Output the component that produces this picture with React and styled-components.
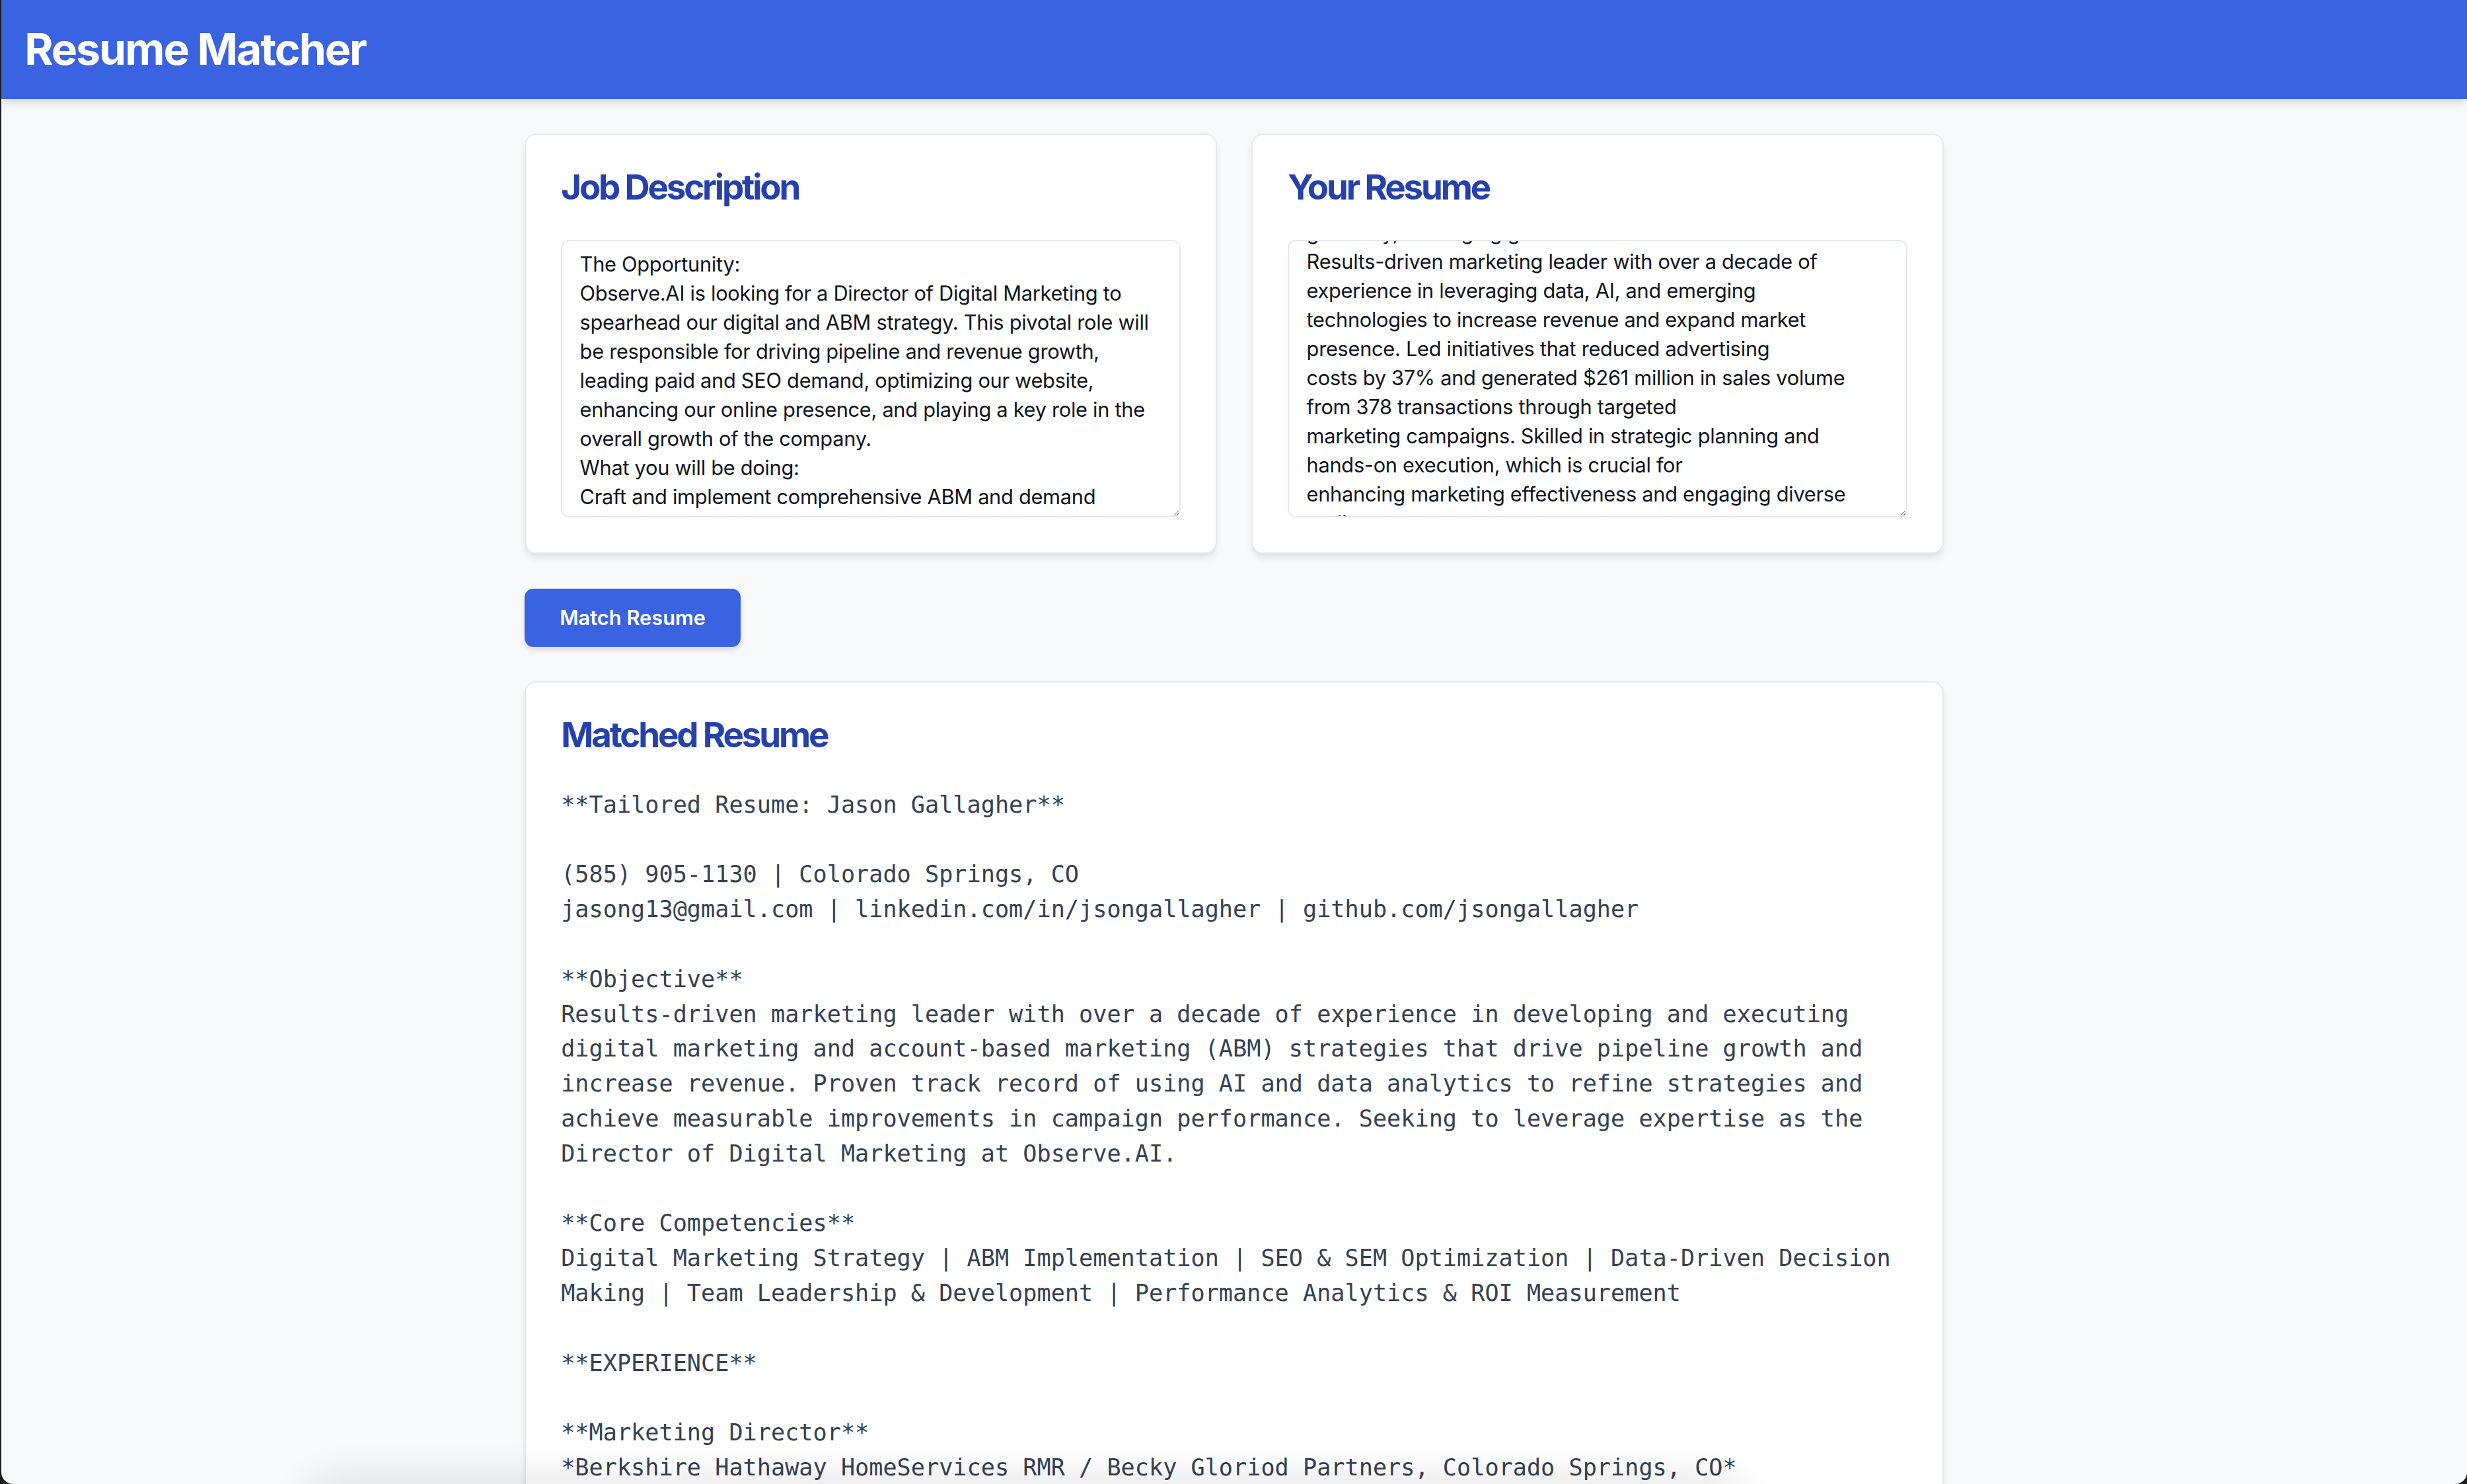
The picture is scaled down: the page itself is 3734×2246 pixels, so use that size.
import { useEffect, useRef } from "react";
import styled, { createGlobalStyle } from "styled-components";

const GlobalStyle = createGlobalStyle`
  html, body {
    margin: 0;
    padding: 0;
    overflow: hidden;
    background: #1d1d1f;
  }
  * {
    box-sizing: border-box;
  }
`;

// outer screen: the dark strip on the left and round bottom corners come from the window frame
const Screen = styled.div`
  width: 3734px;
  height: 2246px;
  overflow: hidden;
  background: #1d1d1f;
`;

const Window = styled.div`
  position: relative;
  height: 100%;
  margin-left: 2px;
  background: #f8f9fb;
  border-radius: 0 0 18px 18px;
  overflow: hidden;
`;

// the screenshot was taken at 2.2x, so the page is laid out in css px and zoomed
const Page = styled.div`
  zoom: 2.2;
  font-family: Inter, "Noto Sans", sans-serif;
`;

const Header = styled.header`
  position: relative;
  z-index: 1;
  padding: 16px 16px;
  background: #3a63e1;
  box-shadow: 0 4px 6px -1px rgba(0, 0, 0, 0.1), 0 2px 4px -2px rgba(0, 0, 0, 0.1);
`;

const AppTitle = styled.h1`
  margin: 0;
  color: #ffffff;
  font-size: 30px;
  line-height: 36px;
  font-weight: 700;
  letter-spacing: -0.03em;
`;

const Main = styled.main`
  max-width: 1024px;
  margin: 0 auto;
  padding: 24px;
`;

const InputGrid = styled.div`
  display: grid;
  grid-template-columns: 1fr 1fr;
  gap: 24px;
  margin-bottom: 24px;
`;

const Card = styled.section`
  background: #ffffff;
  border: 1px solid #e6e8ee;
  border-radius: 8px;
  padding: 20px 24px 24px;
  box-shadow: 0 4px 6px -1px rgba(0, 0, 0, 0.08), 0 2px 4px -2px rgba(0, 0, 0, 0.08);
`;

const CardTitle = styled.h2`
  margin: 0 0 20px;
  color: #2541ab;
  font-size: 24px;
  line-height: 32px;
  font-weight: 700;
  letter-spacing: -0.06em;
`;

const TextBox = styled.textarea`
  display: block;
  width: 100%;
  height: 191px;
  padding: 6px 12px 10px;
  border: 1px solid #e3e7ee;
  border-radius: 6px;
  background: #ffffff;
  color: #0f1420;
  font-family: Inter, "Noto Sans", sans-serif;
  font-size: 14px;
  line-height: 20px;
  letter-spacing: -0.01em;
  resize: vertical;
  outline: none;
  scrollbar-width: none;
`;

const MatchButton = styled.button`
  display: block;
  height: 40px;
  margin-bottom: 24px;
  padding: 0 24px;
  border: none;
  border-radius: 6px;
  background: #3a63e1;
  color: #ffffff;
  font-family: Inter, "Noto Sans", sans-serif;
  font-size: 14px;
  line-height: 20px;
  font-weight: 600;
  cursor: pointer;
  box-shadow: 0 2px 4px rgba(0, 0, 0, 0.12);
`;

const ResumeOutput = styled.pre`
  margin: 0;
  color: #334155;
  font-family: "DejaVu Sans Mono", "Liberation Mono", monospace;
  font-size: 16px;
  line-height: 24px;
  white-space: pre-wrap;
`;

// shadow of something sitting just under the bottom edge of the window
const BottomShade = styled.div`
  position: absolute;
  left: 470px;
  width: 2160px;
  bottom: -90px;
  height: 90px;
  border-radius: 40px;
  box-shadow: 0 0 60px 10px rgba(0, 0, 0, 0.1);
`;

const jobDescription = `The Opportunity:
Observe.AI is looking for a Director of Digital Marketing to spearhead our digital and ABM strategy. This pivotal role will be responsible for driving pipeline and revenue growth, leading paid and SEO demand, optimizing our website, enhancing our online presence, and playing a key role in the overall growth of the company.
What you will be doing:
Craft and implement comprehensive ABM and demand generation strategies to drive pipeline growth and revenue.
Own paid search, paid social, SEO and website performance.
Partner with sales and product marketing on target account lists.`;

const yourResume = `Jason Gallagher
(585) 905-1130 | Colorado Springs, CO
jasong13@gmail.com | linkedin.com/in/jsongallagher
github.com/jsongallagher

SUMMARY
generally, leveraging growth
Results-driven marketing leader with over a decade of
experience in leveraging data, AI, and emerging
technologies to increase revenue and expand market
presence. Led initiatives that reduced advertising
costs by 37% and generated $261 million in sales volume
from 378 transactions through targeted
marketing campaigns. Skilled in strategic planning and
hands-on execution, which is crucial for
enhancing marketing effectiveness and engaging diverse
audiences.`;

const matchedResume = `**Tailored Resume: Jason Gallagher**

(585) 905-1130 | Colorado Springs, CO
jasong13@gmail.com | linkedin.com/in/jsongallagher | github.com/jsongallagher

**Objective**
Results-driven marketing leader with over a decade of experience in developing and executing digital marketing and account-based marketing (ABM) strategies that drive pipeline growth and increase revenue. Proven track record of using AI and data analytics to refine strategies and achieve measurable improvements in campaign performance. Seeking to leverage expertise as the Director of Digital Marketing at Observe.AI.

**Core Competencies**
Digital Marketing Strategy | ABM Implementation | SEO & SEM Optimization | Data-Driven Decision Making | Team Leadership & Development | Performance Analytics & ROI Measurement

**EXPERIENCE**

**Marketing Director**
*Berkshire Hathaway HomeServices RMR / Becky Gloriod Partners, Colorado Springs, CO*
*2019 - Present*
- Developed and executed digital marketing strategies that reduced advertising costs by 37%.
- Generated $261 million in sales volume from 378 transactions through targeted campaigns.`;

function App() {
  const resumeRef = useRef(null);

  useEffect(() => {
    // the resume box is scrolled down to the summary paragraph
    if (resumeRef.current) resumeRef.current.scrollTop = 142;
  }, []);

  return (
    <Screen>
      <GlobalStyle />
      <Window>
        <Page>
          <Header>
            <AppTitle>Resume Matcher</AppTitle>
          </Header>
          <Main>
            <InputGrid>
              <Card>
                <CardTitle>Job Description</CardTitle>
                <TextBox defaultValue={jobDescription} spellCheck={false} />
              </Card>
              <Card>
                <CardTitle>Your Resume</CardTitle>
                <TextBox ref={resumeRef} defaultValue={yourResume} spellCheck={false} />
              </Card>
            </InputGrid>
            <MatchButton>Match Resume</MatchButton>
            <Card>
              <CardTitle>Matched Resume</CardTitle>
              <ResumeOutput>{matchedResume}</ResumeOutput>
            </Card>
          </Main>
        </Page>
        <BottomShade />
      </Window>
    </Screen>
  );
}

export default App;
